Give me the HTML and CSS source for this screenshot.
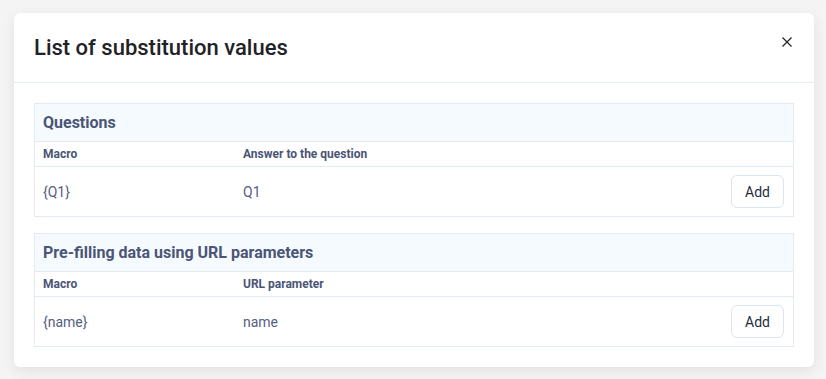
FILE: index.html
```html
<!DOCTYPE html>
<html lang="en">

<head>
    <meta charset="UTF-8">
    <meta name="viewport" content="width=device-width, initial-scale=1.0">
    <title>List of substitution values</title>
    <link rel="stylesheet" href="styles.css">
</head>

<body>
    <div class="modal">
        <div class="modal-header">
            <h2 class="modal-title">List of substitution values</h2>
            <button class="modal-close" aria-label="Close">
                <svg width="10" height="10" viewBox="0 0 10 10">
                    <path d="M0.5 0.5 L9.5 9.5 M9.5 0.5 L0.5 9.5" stroke="#222" stroke-width="1.2" fill="none" />
                </svg>
            </button>
        </div>

        <div class="modal-body">
            <table class="macro-table">
                <caption>Questions</caption>
                <thead>
                    <tr>
                        <th scope="col" class="col-macro">Macro</th>
                        <th scope="col">Answer to the question</th>
                        <th scope="col"></th>
                    </tr>
                </thead>
                <tbody>
                    <tr>
                        <td>{Q1}</td>
                        <td>Q1</td>
                        <td class="col-action"><button class="btn-add">Add</button></td>
                    </tr>
                </tbody>
            </table>

            <table class="macro-table">
                <caption>Pre-filling data using URL parameters</caption>
                <thead>
                    <tr>
                        <th scope="col" class="col-macro">Macro</th>
                        <th scope="col">URL parameter</th>
                        <th scope="col"></th>
                    </tr>
                </thead>
                <tbody>
                    <tr>
                        <td>{name}</td>
                        <td>name</td>
                        <td class="col-action"><button class="btn-add">Add</button></td>
                    </tr>
                </tbody>
            </table>
        </div>
    </div>
</body>

</html>
```

FILE: styles.css
```css
body {
    margin: 0;
    padding: 13px 12px 13px 14px;
    background-color: #f4f4f5;
    font-family: Roboto, "Liberation Sans", sans-serif;
}

.modal {
    width: 800px;
    background-color: #fff;
    border-radius: 6px;
    box-shadow: 0 4px 14px rgba(0, 0, 0, 0.08);
}

.modal-header {
    display: flex;
    align-items: center;
    justify-content: space-between;
    height: 69px;
    padding: 0 20px;
    border-bottom: 1px solid #e6eef4;
}

.modal-title {
    margin: 0;
    font-size: 22px;
    font-weight: 500;
    color: #1f2226;
}

.modal-close {
    border: 0;
    background: none;
    padding: 0;
    margin-right: 2px;
    margin-top: -12px;
    width: 10px;
    height: 10px;
    display: flex;
    cursor: pointer;
}

.modal-body {
    display: flex;
    flex-direction: column;
    gap: 16px;
    padding: 20px 20px 20px;
}

.macro-table {
    width: 100%;
    border: 1px solid #e3ebf1;
    border-collapse: collapse;
    table-layout: fixed;
    color: #4b5575;
}

.macro-table caption {
    text-align: left;
    font-size: 16px;
    font-weight: 700;
    height: 38px;
    line-height: 38px;
    padding: 0 8px;
    background-color: #f5faff;
    border: 1px solid #e3ebf1;
    border-bottom: 0;
    box-sizing: border-box;
}

.macro-table th,
.macro-table td {
    text-align: left;
    padding: 0 8px;
}

.macro-table th {
    height: 24px;
    font-size: 12px;
    font-weight: 700;
    border-top: 1px solid #e3ebf1;
    border-bottom: 1px solid #e3ebf1;
}

.macro-table .col-macro {
    width: 184px;
}

.macro-table td {
    height: 49px;
    font-size: 14px;
    color: #556080;
}

.macro-table .col-action {
    text-align: right;
    padding-right: 9px;
}

.btn-add {
    width: 53px;
    height: 33px;
    border: 1px solid #dbe6ee;
    border-radius: 6px;
    background-color: #fff;
    font-family: inherit;
    font-size: 14px;
    color: #262b3a;
    cursor: pointer;
}
```
